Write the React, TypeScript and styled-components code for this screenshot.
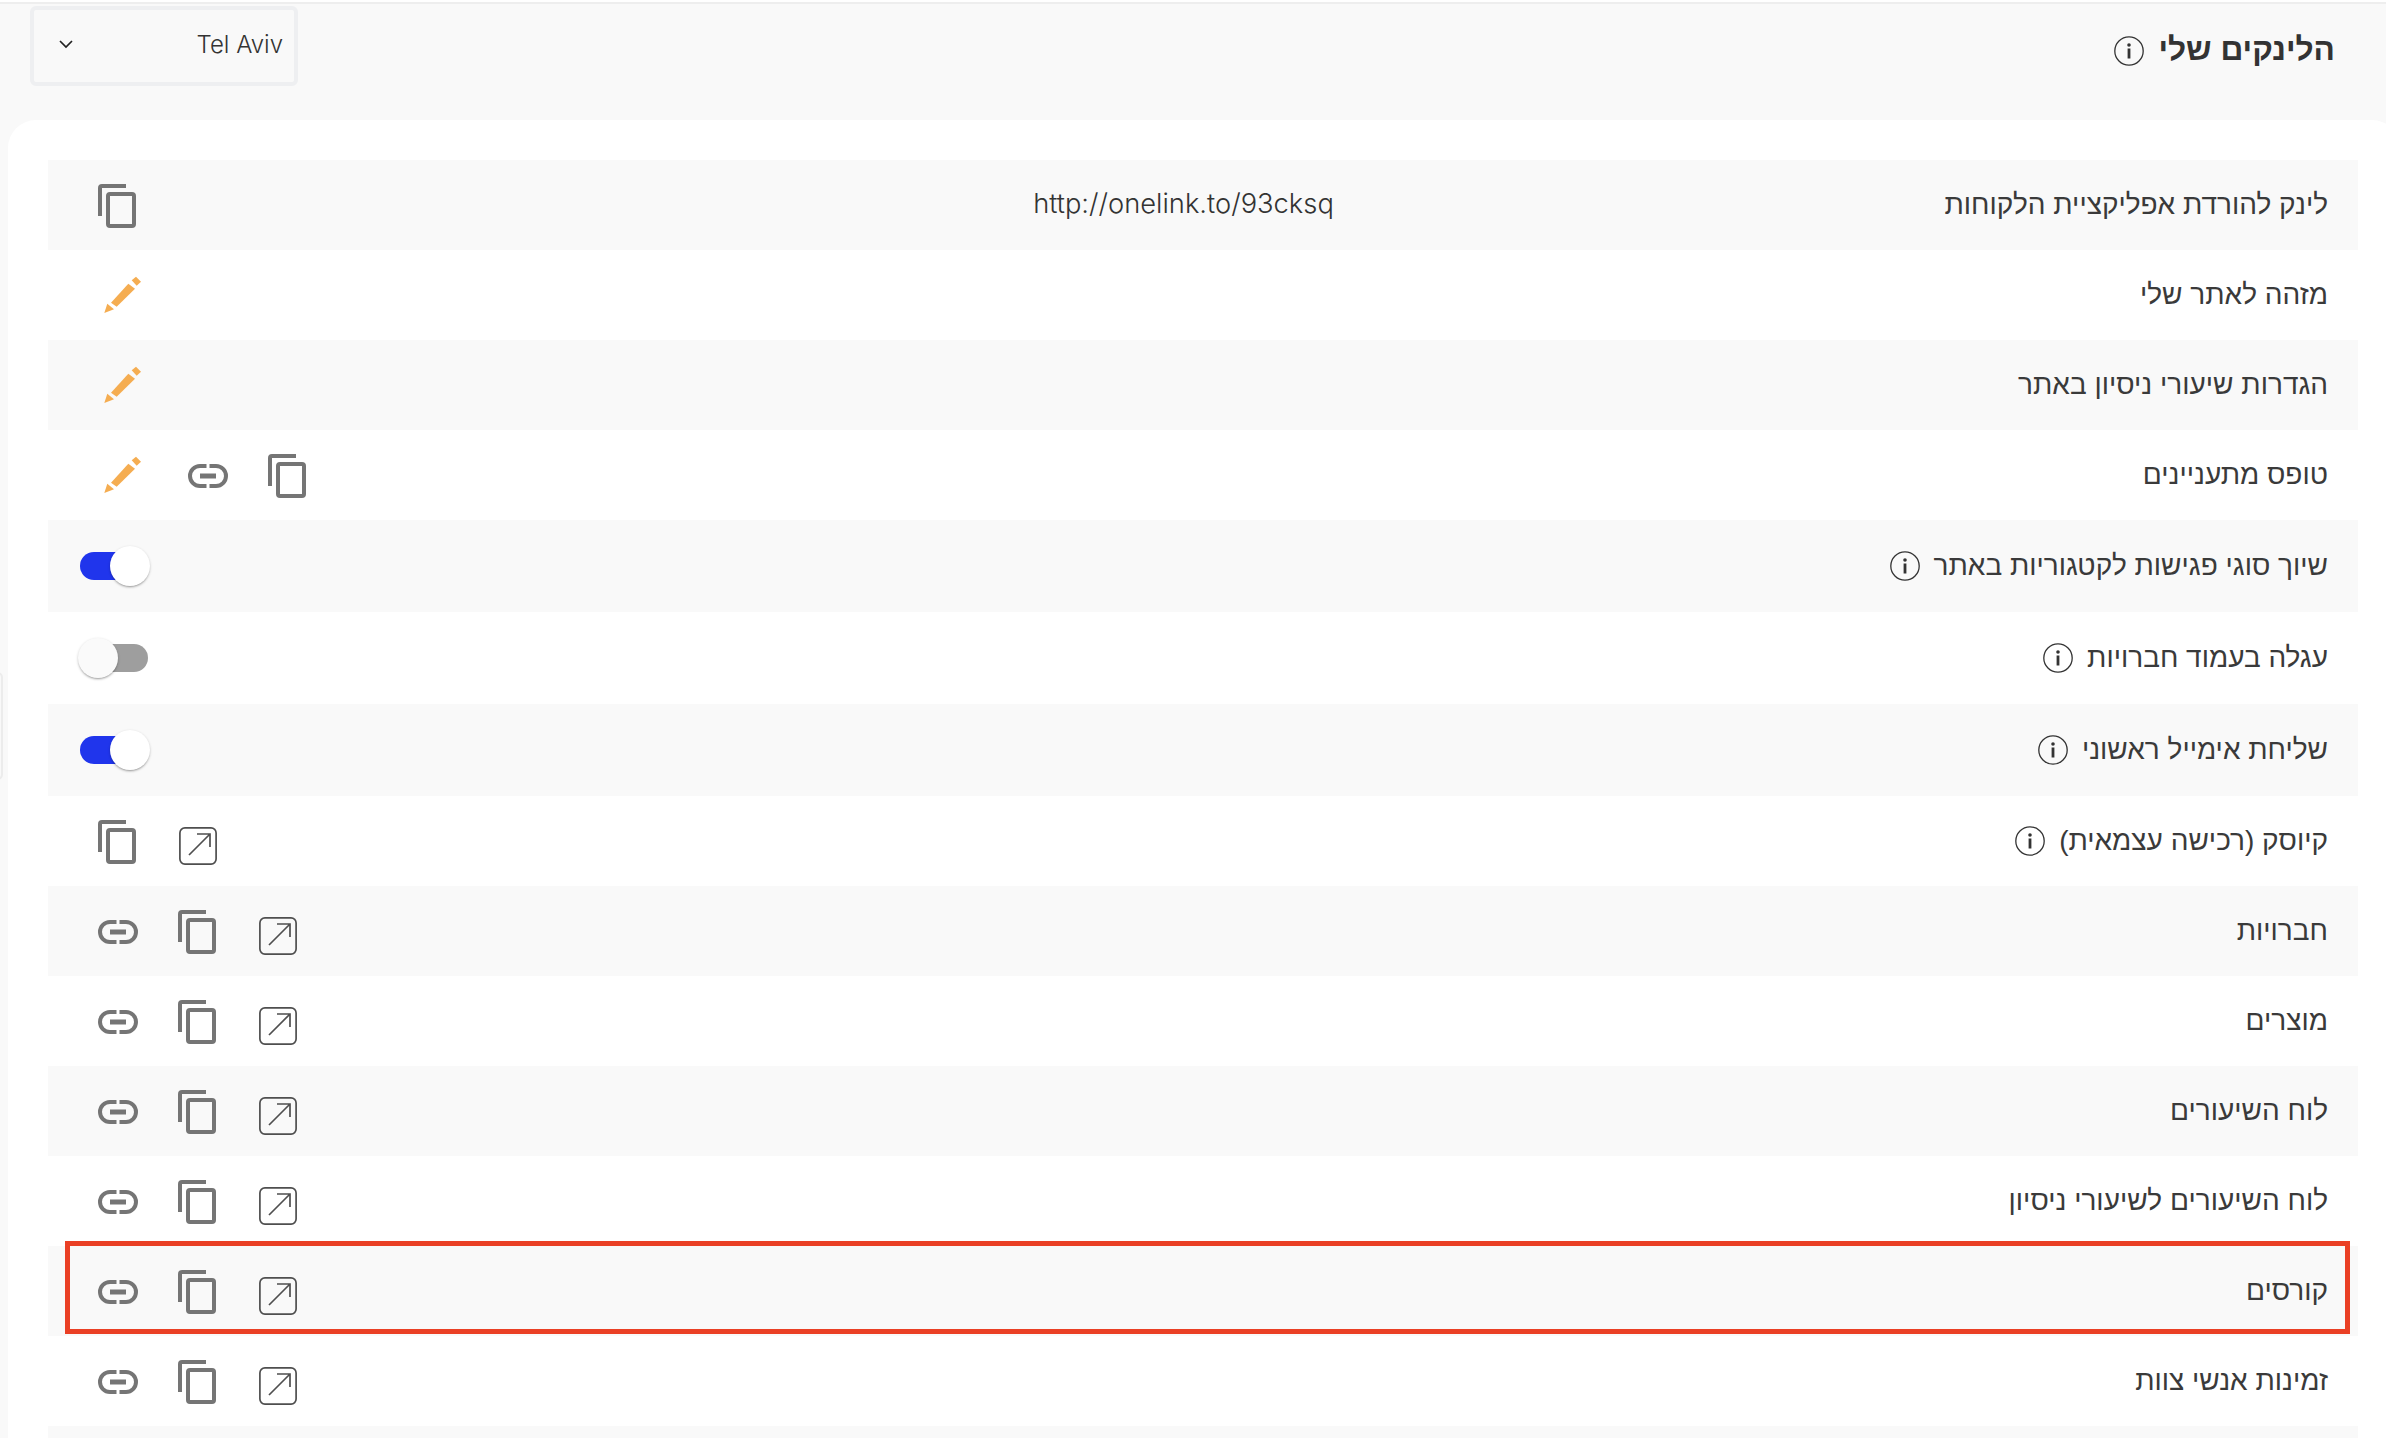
import styled, { createGlobalStyle } from 'styled-components';

const GlobalStyle = createGlobalStyle`
  html, body {
    margin: 0;
    padding: 0;
    height: 100%;
    overflow: hidden;
    background: #f9f9f9;
  }
  * {
    box-sizing: border-box;
  }
`;

const hebrewStack = '"Liberation Sans", "Open Sans", "DejaVu Sans", sans-serif';
const latinStack = 'Inter, "Open Sans", sans-serif';

const Page = styled.div`
  position: relative;
  width: 2386px;
  height: 1438px;
  overflow: hidden;
  border-top: 2px solid #ffffff;
  background: #f9f9f9;
  font-family: ${hebrewStack};
  color: #3a3a3a;
`;

const SideTab = styled.div`
  position: absolute;
  left: -8px;
  top: 670px;
  width: 11px;
  height: 108px;
  border: 2px solid #ececec;
  border-radius: 6px;
`;

const Header = styled.header`
  direction: rtl;
  display: flex;
  height: 118px;
  padding: 4px 51px 0 0;
  border-top: 2px solid #eeeeee;
`;

const TitleGroup = styled.div`
  display: flex;
  align-items: center;
  gap: 14px;
  height: 86px;
`;

const Title = styled.h1`
  margin: 0;
  padding-bottom: 3px;
  font-size: 31.7px;
  font-weight: 700;
  color: #333333;
  white-space: nowrap;
`;

const CitySelect = styled.div`
  position: absolute;
  left: 30px;
  top: 4px;
  width: 268px;
  height: 80px;
  display: flex;
  align-items: center;
  justify-content: space-between;
  padding: 0 11px 3px 25px;
  border: 4px solid #eeeff1;
  border-radius: 6px;
  font-family: ${latinStack};
  font-size: 24px;
  font-weight: 300;
  color: #333333;
`;

const Panel = styled.main`
  margin: 0 -14px 0 8px;
  padding: 40px 42px 0 40px;
  height: 1400px;
  background: #ffffff;
  border-radius: 28px 28px 0 0;
`;

const Row = styled.div<{ $tall?: boolean }>`
  direction: rtl;
  display: grid;
  grid-template-columns: 800px 1fr 741px;
  align-items: center;
  height: ${props => (props.$tall ? 92 : 90)}px;
  padding: 0 30px 0 50px;

  &:nth-child(odd) {
    background: #f9f9f9;
  }
`;

const Label = styled.div`
  display: flex;
  align-items: center;
  gap: 14px;
  padding-bottom: 1px;
  font-size: 28px;
  color: #3a3a3a;
  white-space: nowrap;
`;

const Value = styled.div`
  direction: ltr;
  padding-bottom: 3px;
  text-align: center;
  font-family: ${latinStack};
  font-size: 27.3px;
  font-weight: 300;
  color: #333333;
`;

const Actions = styled.div`
  direction: ltr;
  grid-column: 3;
  display: flex;
  align-items: center;
`;

const IconSlot = styled.span<{ $gap?: number; $lead?: number; $shift?: number }>`
  display: inline-flex;
  margin-left: ${props => props.$lead ?? 0}px;
  margin-right: ${props => props.$gap ?? 0}px;
  margin-top: ${props => props.$shift ?? 0}px;
  color: #757575;

  svg {
    display: block;
  }
`;

const SwitchTrack = styled.span<{ $on: boolean }>`
  position: relative;
  display: block;
  width: 68px;
  height: 28px;
  margin-left: -18px;
  border-radius: 14px;
  background: ${props => (props.$on ? '#2035ec' : '#9e9e9e')};
`;

const SwitchThumb = styled.span<{ $on: boolean }>`
  position: absolute;
  top: -6px;
  left: ${props => (props.$on ? 30 : -2)}px;
  width: 40px;
  height: 40px;
  border-radius: 50%;
  background: ${props => (props.$on ? '#ffffff' : '#fafafa')};
  box-shadow: 0 2px 2px -1px rgba(0, 0, 0, 0.25), 0 1px 3px rgba(0, 0, 0, 0.2);
`;

const Highlight = styled.div`
  position: absolute;
  left: 65px;
  top: 1239px;
  width: 2285px;
  height: 93px;
  border: 5px solid #ea4025;
`;

function CopyIcon() {
  return (
    <svg width="38" height="44" viewBox="0 0 38 44" fill="none">
      <path d="M28 2H4a2 2 0 0 0-2 2v28" stroke="currentColor" strokeWidth="4" />
      <rect x="10" y="10" width="26" height="32" rx="2" stroke="currentColor" strokeWidth="4" />
    </svg>
  );
}

function LinkIcon() {
  return (
    <svg width="40" height="24" viewBox="0 0 40 24" fill="none" stroke="currentColor">
      <path d="M18.5 2H12a10 10 0 0 0 0 20h6.5" strokeWidth="4" />
      <path d="M21.5 2H28a10 10 0 0 1 0 20h-6.5" strokeWidth="4" />
      <path d="M12 12h16" strokeWidth="5" />
    </svg>
  );
}

function ExternalIcon() {
  return (
    <svg width="38" height="38" viewBox="0 0 38 38" fill="none" stroke="#4f4f4f" strokeWidth="1.7">
      <rect x="0.9" y="0.9" width="36.2" height="36.2" rx="5" />
      <path d="M10 28L31 7M18 7h13v13" />
    </svg>
  );
}

function PencilIcon() {
  return (
    <svg width="37" height="38" viewBox="0 0 37 38" fill="#f5ad51">
      <polygon points="0.3,37 3.3,27.7 10,33.3" />
      <polygon points="7,26.7 24.3,7.7 31,12.7 12.7,30.7" />
      <polygon points="27.7,4.3 32,0.7 37,5.7 32.7,9.7" />
    </svg>
  );
}

function InfoIcon() {
  return (
    <svg width="30" height="30" viewBox="0 0 30 30" fill="none">
      <circle cx="15" cy="15" r="14.2" stroke="#333333" strokeWidth="1.3" />
      <circle cx="15" cy="9" r="1.8" fill="#333333" />
      <rect x="13.6" y="12.5" width="2.8" height="10" fill="#333333" />
    </svg>
  );
}

function ChevronIcon() {
  return (
    <svg width="14" height="9" viewBox="0 0 14 9" fill="none" stroke="#222222" strokeWidth="1.7">
      <path d="M1 1l6 6 6-6" />
    </svg>
  );
}

const Pencil = () => (
  <IconSlot $lead={6} $gap={47}>
    <PencilIcon />
  </IconSlot>
);

const LinkSet = () => (
  <>
    <IconSlot $gap={40} $shift={2}>
      <LinkIcon />
    </IconSlot>
    <IconSlot $gap={43} $shift={2}>
      <CopyIcon />
    </IconSlot>
    <IconSlot $shift={10}>
      <ExternalIcon />
    </IconSlot>
  </>
);

const Switch = ({ on }: { on: boolean }) => (
  <SwitchTrack $on={on}>
    <SwitchThumb $on={on} />
  </SwitchTrack>
);

function App() {
  return (
    <>
      <GlobalStyle />
      <Page>
        <SideTab />
        <Header>
          <TitleGroup>
            <Title>הלינקים שלי</Title>
            <InfoIcon />
          </TitleGroup>
        </Header>
        <CitySelect>
          <ChevronIcon />
          <span>Tel Aviv</span>
        </CitySelect>
        <Panel>
          <Row>
            <Label>לינק להורדת אפליקציית הלקוחות</Label>
            <Value>http://onelink.to/93cksq</Value>
            <Actions>
              <IconSlot $shift={2}>
                <CopyIcon />
              </IconSlot>
            </Actions>
          </Row>
          <Row>
            <Label>מזהה לאתר שלי</Label>
            <Actions>
              <Pencil />
            </Actions>
          </Row>
          <Row>
            <Label>הגדרות שיעורי ניסיון באתר</Label>
            <Actions>
              <Pencil />
            </Actions>
          </Row>
          <Row>
            <Label>טופס מתעניינים</Label>
            <Actions>
              <Pencil />
              <IconSlot $gap={40} $shift={2}>
                <LinkIcon />
              </IconSlot>
              <IconSlot $shift={2}>
                <CopyIcon />
              </IconSlot>
            </Actions>
          </Row>
          <Row $tall>
            <Label>
              שיוך סוגי פגישות לקטגוריות באתר
              <InfoIcon />
            </Label>
            <Actions>
              <Switch on />
            </Actions>
          </Row>
          <Row $tall>
            <Label>
              עגלה בעמוד חברויות
              <InfoIcon />
            </Label>
            <Actions>
              <Switch on={false} />
            </Actions>
          </Row>
          <Row $tall>
            <Label>
              שליחת אימייל ראשוני
              <InfoIcon />
            </Label>
            <Actions>
              <Switch on />
            </Actions>
          </Row>
          <Row>
            <Label>
              קיוסק (רכישה עצמאית)
              <InfoIcon />
            </Label>
            <Actions>
              <IconSlot $gap={43} $shift={2}>
                <CopyIcon />
              </IconSlot>
              <IconSlot $shift={10}>
                <ExternalIcon />
              </IconSlot>
            </Actions>
          </Row>
          <Row>
            <Label>חברויות</Label>
            <Actions>
              <LinkSet />
            </Actions>
          </Row>
          <Row>
            <Label>מוצרים</Label>
            <Actions>
              <LinkSet />
            </Actions>
          </Row>
          <Row>
            <Label>לוח השיעורים</Label>
            <Actions>
              <LinkSet />
            </Actions>
          </Row>
          <Row>
            <Label>לוח השיעורים לשיעורי ניסיון</Label>
            <Actions>
              <LinkSet />
            </Actions>
          </Row>
          <Row>
            <Label>קורסים</Label>
            <Actions>
              <LinkSet />
            </Actions>
          </Row>
          <Row>
            <Label>זמינות אנשי צוות</Label>
            <Actions>
              <LinkSet />
            </Actions>
          </Row>
          <Row />
        </Panel>
        <Highlight />
      </Page>
    </>
  );
}

export default App;
